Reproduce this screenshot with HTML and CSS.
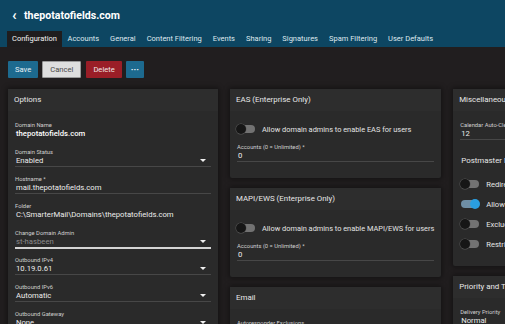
FILE: index.html
```html
<!DOCTYPE html>
<html lang="en">
  <head>
    <meta charset="utf-8" />
    <title>thepotatofields.com</title>
    <link rel="stylesheet" href="styles.css">
  </head>

  <body>
    <div class="topbar">
      <div class="title-row">
        <span class="back">&#8249;</span>
        <span class="domain-title">thepotatofields.com</span>
      </div>
      <div class="tabs">
        <span class="tab active">Configuration</span>
        <span class="tab">Accounts</span>
        <span class="tab">General</span>
        <span class="tab">Content Filtering</span>
        <span class="tab">Events</span>
        <span class="tab">Sharing</span>
        <span class="tab">Signatures</span>
        <span class="tab">Spam Filtering</span>
        <span class="tab">User Defaults</span>
      </div>
    </div>

    <div class="toolbar">
      <button type="button" class="btn btn-blue">Save</button>
      <button type="button" class="btn btn-light">Cancel</button>
      <button type="button" class="btn btn-red">Delete</button>
      <button type="button" class="btn btn-blue btn-more">&middot;&middot;&middot;</button>
    </div>

    <div class="columns">
      <div class="column">
        <div class="panel">
          <div class="panel-head">Options</div>
          <div class="panel-body">
            <div class="field plain">
              <div class="label">Domain Name</div>
              <div class="value strong">thepotatofields.com</div>
            </div>
            <div class="field select">
              <div class="label">Domain Status</div>
              <div class="value">Enabled</div>
            </div>
            <div class="field">
              <div class="label">Hostname *</div>
              <div class="value">mail.thepotatofields.com</div>
            </div>
            <div class="field plain">
              <div class="label">Folder</div>
              <div class="value">C:\SmarterMail\Domains\thepotatofields.com</div>
            </div>
            <div class="field select focused">
              <div class="label">Change Domain Admin</div>
              <div class="value muted">st-hasbeen</div>
            </div>
            <div class="field select">
              <div class="label">Outbound IPv4</div>
              <div class="value">10.19.0.61</div>
            </div>
            <div class="field select">
              <div class="label">Outbound IPv6</div>
              <div class="value">Automatic</div>
            </div>
            <div class="field select">
              <div class="label">Outbound Gateway</div>
              <div class="value">None</div>
            </div>
          </div>
        </div>
      </div>

      <div class="column">
        <div class="panel">
          <div class="panel-head">EAS (Enterprise Only)</div>
          <div class="panel-body">
            <div class="toggle-row"><span class="toggle"></span>Allow domain admins to enable EAS for users</div>
            <div class="field">
              <div class="label">Accounts (0 = Unlimited) *</div>
              <div class="value">0</div>
            </div>
          </div>
        </div>
        <div class="panel">
          <div class="panel-head">MAPI/EWS (Enterprise Only)</div>
          <div class="panel-body">
            <div class="toggle-row"><span class="toggle"></span>Allow domain admins to enable MAPI/EWS for users</div>
            <div class="field">
              <div class="label">Accounts (0 = Unlimited) *</div>
              <div class="value">0</div>
            </div>
          </div>
        </div>
        <div class="panel">
          <div class="panel-head">Email</div>
          <div class="panel-body">
            <div class="field">
              <div class="label">Autoresponder Exclusions</div>
              <div class="value">&nbsp;</div>
            </div>
          </div>
        </div>
      </div>

      <div class="column">
        <div class="panel">
          <div class="panel-head">Miscellaneous</div>
          <div class="panel-body">
            <div class="field">
              <div class="label">Calendar Auto-Clean</div>
              <div class="value">12</div>
            </div>
            <div class="subhead">Postmaster Mailbox</div>
            <div class="toggle-list">
              <div class="toggle-item"><span class="toggle"></span>Redirect postmaster</div>
              <div class="toggle-item"><span class="toggle on"></span>Allow domain admins</div>
              <div class="toggle-item"><span class="toggle"></span>Exclude from</div>
              <div class="toggle-item"><span class="toggle"></span>Restrict</div>
            </div>
          </div>
        </div>
        <div class="panel">
          <div class="panel-head">Priority and Throttling</div>
          <div class="panel-body">
            <div class="field select">
              <div class="label">Delivery Priority</div>
              <div class="value">Normal</div>
            </div>
          </div>
        </div>
      </div>
    </div>
  </body>
</html>
```

FILE: styles.css
```css
body {
  margin: 0;
  height: 324px;
  overflow: hidden;
  font-family: Roboto, "Liberation Sans", sans-serif;
  background-color: #211e1f;
  color: #e6e6e6;
}

.topbar {
  background-color: #0d4662;
}

.title-row {
  display: flex;
  align-items: center;
  height: 31px;
  padding-left: 12px;
}

.back {
  font-size: 15px;
  font-weight: bold;
  color: #fff;
  width: 12px;
  line-height: 14px;
  margin-top: -2px;
}

.domain-title {
  font-size: 10.6px;
  font-weight: bold;
  color: #fff;
}

.tabs {
  display: flex;
  height: 16px;
  padding-left: 7px;
}

.tab {
  font-size: 7.5px;
  line-height: 16px;
  padding: 0 5.5px;
  color: #dfe8ee;
}

.tab.active {
  background-color: #1f1d1e;
  padding: 0 5px;
  color: #f2f2f2;
}

.toolbar {
  display: flex;
  gap: 4px;
  padding: 14px 8px 11px;
}

.btn {
  font-family: inherit;
  font-size: 7.6px;
  height: 17px;
  padding: 0 7px;
  border: none;
  border-radius: 1px;
  color: #e9f1f5;
  cursor: pointer;
}

.btn-blue {
  background-color: #1d6a8f;
}

.btn-light {
  background-color: #dedede;
  border: 1px solid #9a9a9a;
  color: #4a4a4a;
}

.btn-red {
  background-color: #9a1e27;
  color: #f0e4e4;
  margin-left: 1px;
}

.btn-more {
  font-weight: bold;
  font-size: 9px;
  padding: 0 5px;
}

/* three columns of cards */
.columns {
  display: flex;
  gap: 12px;
  padding: 0 8px;
}

.column {
  flex: 0 0 210px;
  display: flex;
  flex-direction: column;
  gap: 10px;
}

.panel {
  background-color: #2a2a2a;
  border-radius: 2px;
  box-shadow: 0 0 5px 2px rgba(0, 0, 0, 0.35);
}

.panel-head {
  background-color: #2d2d2d;
  font-size: 7.9px;
  line-height: 22px;
  padding: 0 6px;
  color: #e8e8e8;
  white-space: nowrap;
}

.panel-body {
  padding: 10px 7px 8px;
}

.field {
  position: relative;
  border-bottom: 1px solid #474747;
  margin-bottom: 8px;
}

.field.plain {
  border-bottom-color: transparent;
}

.field.focused {
  border-bottom: 2px solid #d4d4d4;
  margin-bottom: 7px;
}

.label {
  font-size: 5.8px;
  line-height: 8px;
  color: #d0d0d0;
  white-space: nowrap;
}

.value {
  font-size: 7.7px;
  line-height: 10px;
  color: #ececec;
  padding-left: 1px;
  white-space: nowrap;
}

.value.strong {
  font-weight: 500;
  color: #fff;
}

.value.muted {
  color: #8a8a8a;
}

.field.select::after {
  content: "";
  position: absolute;
  right: 5px;
  bottom: 4px;
  border-left: 3px solid transparent;
  border-right: 3px solid transparent;
  border-top: 3px solid #f0f0f0;
}

.toggle-row {
  display: flex;
  align-items: center;
  gap: 7px;
  height: 12px;
  margin: 2px 0 8px;
  font-size: 7.4px;
  white-space: nowrap;
  color: #e4e4e4;
}

.toggle {
  position: relative;
  flex: 0 0 18px;
  height: 8px;
  border-radius: 4px;
  background-color: #727272;
}

.toggle::before {
  content: "";
  position: absolute;
  left: -1px;
  top: -1.5px;
  width: 10px;
  height: 10px;
  border-radius: 50%;
  background-color: #161616;
  box-shadow: 0 0 0 0.5px #5a5a5a;
}

.toggle.on {
  background-color: #6f8fa6;
}

.toggle.on::before {
  left: 9px;
  background-color: #2a9ee0;
  box-shadow: none;
}

.subhead {
  font-size: 7.9px;
  line-height: 12px;
  padding-top: 7px;
  padding-left: 1px;
  white-space: nowrap;
}

.toggle-list {
  margin-top: 7px;
  margin-bottom: 4px;
}

.toggle-item {
  display: flex;
  align-items: center;
  gap: 7px;
  height: 20px;
  padding-left: 1px;
  font-size: 7.6px;
  white-space: nowrap;
}
```
